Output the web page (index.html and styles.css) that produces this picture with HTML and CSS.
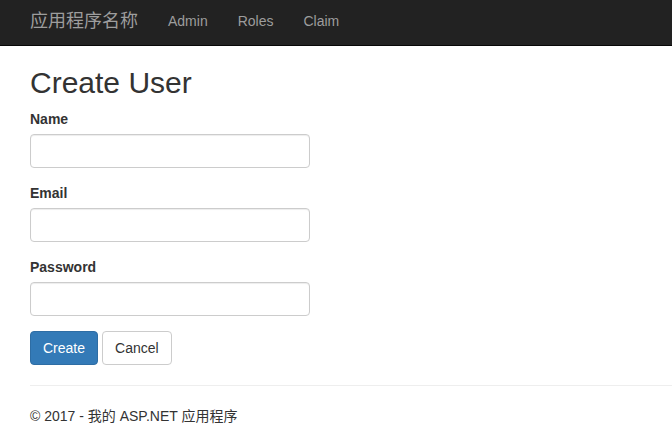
FILE: index.html
```html
<!DOCTYPE html>
<html lang="zh-CN">
<head>
<meta charset="utf-8">
<title>Create User - 应用程序名称</title>
<link rel="stylesheet" href="styles.css">
</head>
<body>
<nav class="navbar">
  <a class="brand" href="#">应用程序名称</a>
  <ul class="nav">
    <li><a href="#">Admin</a></li>
    <li><a href="#">Roles</a></li>
    <li><a href="#">Claim</a></li>
  </ul>
</nav>
<div class="body-content">
  <h2 class="title">Create User</h2>
  <form class="form">
    <div class="form-group">
      <label class="label" for="name">Name</label>
      <input class="form-control" id="name" type="text">
    </div>
    <div class="form-group">
      <label class="label" for="email">Email</label>
      <input class="form-control" id="email" type="text">
    </div>
    <div class="form-group">
      <label class="label" for="password">Password</label>
      <input class="form-control" id="password" type="password">
    </div>
    <div class="actions">
      <button type="button" class="btn btn-primary">Create</button>
      <button type="button" class="btn btn-default">Cancel</button>
    </div>
  </form>
  <hr class="rule">
  <footer class="footer">
    <p class="footer-text">© 2017 - 我的 ASP.NET 应用程序</p>
  </footer>
</div>
</body>
</html>
```

FILE: styles.css
```css
* {
  box-sizing: border-box;
}

html, body {
  margin: 0;
  padding: 0;
  background: #fff;
}

body {
  font-family: "Liberation Sans", Arial, "Noto Sans CJK SC", sans-serif;
  font-size: 14px;
  line-height: 20px;
  color: #333;
  overflow: hidden;
}

.navbar {
  display: flex;
  align-items: flex-start;
  height: 46px;
  background: #222;
  border-bottom: 1px solid #080808;
  padding-left: 15px;
}

.brand {
  display: block;
  padding: 11px 15px;
  font-size: 18px;
  line-height: 20px;
  color: #9d9d9d;
  text-decoration: none;
}

.nav {
  display: flex;
  list-style: none;
  margin: 0;
  padding: 0;
}

.nav a {
  display: block;
  padding: 11px 15px;
  line-height: 20px;
  color: #9d9d9d;
  text-decoration: none;
}

.body-content {
  padding-left: 30px;
}

.title {
  margin: 20px 0 10px;
  font-size: 30px;
  font-weight: 500;
  line-height: 33px;
  color: #333;
}

.form {
  margin: 0;
}

.form-group {
  margin-bottom: 15px;
}

.label {
  display: block;
  margin-bottom: 5px;
  font-weight: bold;
}

.form-control {
  display: block;
  width: 280px;
  height: 34px;
  padding: 6px 12px;
  font-family: inherit;
  font-size: 14px;
  color: #555;
  background: #fff;
  border: 1px solid #ccc;
  border-radius: 4px;
  box-shadow: inset 0 1px 1px rgba(0, 0, 0, 0.075);
  margin: 0;
}

.actions {
  display: flex;
  gap: 4px;
}

.btn {
  display: inline-block;
  height: 34px;
  padding: 6px 12px;
  font-family: inherit;
  font-size: 14px;
  line-height: 20px;
  border: 1px solid transparent;
  border-radius: 4px;
  margin: 0;
  cursor: pointer;
}

.btn-primary {
  color: #fff;
  background: #337ab7;
  border-color: #2e6da4;
}

.btn-default {
  color: #333;
  background: #fff;
  border-color: #ccc;
}

.rule {
  margin: 20px 0;
  border: 0;
  border-top: 1px solid #eee;
  height: 0;
}

.footer-text {
  margin: 0;
}
```
